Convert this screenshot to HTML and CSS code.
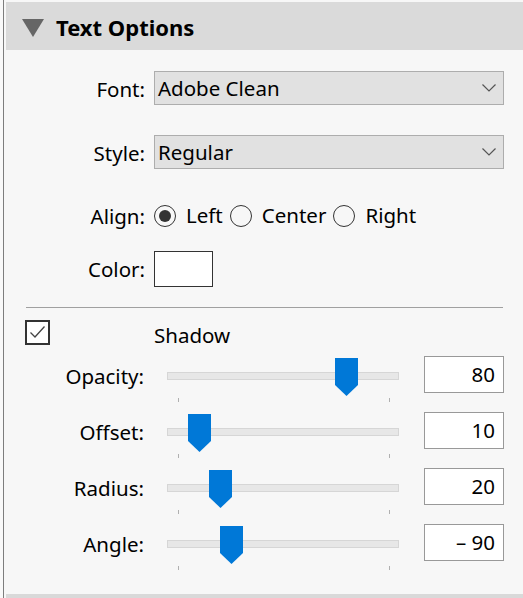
FILE: index.html
```html
<!DOCTYPE html>
<html>
<head>
<meta charset="utf-8">
<link rel="stylesheet" href="styles.css">
</head>
<body>
<div class="panel">
  <div class="header">
    <svg class="caret" width="22" height="18" viewBox="0 0 22 18"><polygon points="0,0 22,0 11,18" fill="#666"/></svg>
    <span class="title">Text Options</span>
  </div>

  <div class="field row-font">
    <span class="label">Font:</span>
    <div class="select"><span>Adobe Clean</span>
      <svg class="chev" width="14" height="8" viewBox="0 0 14 8"><polyline points="0.5,0.5 7,7 13.5,0.5" fill="none" stroke="#555" stroke-width="1.2"/></svg>
    </div>
  </div>

  <div class="field row-style">
    <span class="label">Style:</span>
    <div class="select"><span>Regular</span>
      <svg class="chev" width="14" height="8" viewBox="0 0 14 8"><polyline points="0.5,0.5 7,7 13.5,0.5" fill="none" stroke="#555" stroke-width="1.2"/></svg>
    </div>
  </div>

  <div class="field row-align">
    <span class="label">Align:</span>
    <div class="radios">
      <span class="radio on"></span><span class="rlabel">Left</span>
      <span class="radio"></span><span class="rlabel">Center</span>
      <span class="radio"></span><span class="rlabel">Right</span>
    </div>
  </div>

  <div class="field row-color">
    <span class="label">Color:</span>
    <span class="swatch"></span>
  </div>

  <div class="sep"></div>

  <div class="check-row">
    <span class="checkbox"><svg width="21" height="21" viewBox="0 0 21 21"><polyline points="3.5,10.5 8,15 17.5,4.5" fill="none" stroke="#444" stroke-width="1.3"/></svg></span>
    <span class="check-label">Shadow</span>
  </div>

  <div class="sliders">
    <div class="srow">
      <span class="slabel">Opacity:</span>
      <div class="slider"><div class="track"></div><span class="tick t1"></span><span class="tick t2"></span>
        <svg class="thumb" style="left:168px" width="23" height="38" viewBox="0 0 23 38"><polygon points="0,0 23,0 23,27 11.5,38 0,27" fill="#0078d7"/></svg></div>
      <span class="value">80</span>
    </div>
    <div class="srow">
      <span class="slabel">Offset:</span>
      <div class="slider"><div class="track"></div><span class="tick t1"></span><span class="tick t2"></span>
        <svg class="thumb" style="left:21px" width="23" height="38" viewBox="0 0 23 38"><polygon points="0,0 23,0 23,27 11.5,38 0,27" fill="#0078d7"/></svg></div>
      <span class="value">10</span>
    </div>
    <div class="srow">
      <span class="slabel">Radius:</span>
      <div class="slider"><div class="track"></div><span class="tick t1"></span><span class="tick t2"></span>
        <svg class="thumb" style="left:42px" width="23" height="38" viewBox="0 0 23 38"><polygon points="0,0 23,0 23,27 11.5,38 0,27" fill="#0078d7"/></svg></div>
      <span class="value">20</span>
    </div>
    <div class="srow">
      <span class="slabel">Angle:</span>
      <div class="slider"><div class="track"></div><span class="tick t1"></span><span class="tick t2"></span>
        <svg class="thumb" style="left:53px" width="23" height="38" viewBox="0 0 23 38"><polygon points="0,0 23,0 23,27 11.5,38 0,27" fill="#0078d7"/></svg></div>
      <span class="value">– 90</span>
    </div>
  </div>

  <div class="next-header"></div>
</div>
</body>
</html>
```

FILE: styles.css
```css
html, body {
  margin: 0;
  padding: 0;
  background: #f9f9f9;
}
body {
  font-family: "Noto Sans", "Open Sans", sans-serif;
  font-size: 20.5px;
  color: #000;
}
.panel {
  margin-left: 3px;
  border-left: 1px solid #7d7d7d;
  height: 598px;
  box-sizing: border-box;
  background: #f7f7f7;
  display: flex;
  flex-direction: column;
}
.header {
  margin-top: 2px;
  margin-left: 2px;
  height: 48px;
  background: #dadada;
  display: flex;
  align-items: center;
}
.caret {
  margin-left: 16px;
  margin-top: 4px;
}
.title {
  margin-left: 12px;
  font-weight: 700;
  font-size: 22px;
  line-height: 1;
  padding-top: 2px;
}
.field {
  display: flex;
  align-items: center;
  gap: 9px;
}
.label {
  width: 141px;
  text-align: right;
  line-height: 1;
  padding-top: 3px;
}
.row-font { margin-top: 21px; height: 34px; }
.row-style { margin-top: 30px; height: 34px; }
.row-align { margin-top: 35px; height: 24px; }
.row-align .label { padding-top: 0; }
.row-color { margin-top: 23px; height: 36px; }
.row-color .label { padding-top: 0; }
.select {
  width: 350px;
  height: 34px;
  box-sizing: border-box;
  border: 1px solid #adadad;
  background: #e1e1e1;
  display: flex;
  align-items: center;
  justify-content: space-between;
  padding: 0 7px 0 3px;
  line-height: 1;
}
.select span { padding-top: 1px; }
.radios {
  display: flex;
  align-items: center;
}
.radio {
  width: 22px;
  height: 22px;
  box-sizing: border-box;
  border: 1.5px solid #333;
  border-radius: 50%;
  display: flex;
  align-items: center;
  justify-content: center;
}
.radio.on::after {
  content: "";
  width: 12px;
  height: 12px;
  border-radius: 50%;
  background: #333;
}
.rlabel {
  margin-left: 10px;
  margin-right: 7px;
  line-height: 1;
  padding-bottom: 2px;
}
.swatch {
  width: 59px;
  height: 36px;
  box-sizing: border-box;
  border: 1px solid #333;
  background: #fff;
}
.sep {
  margin-top: 20px;
  margin-left: 22px;
  width: 477px;
  height: 1px;
  background: #a0a0a0;
}
.check-row {
  margin-top: 12px;
  height: 25px;
  display: flex;
  align-items: center;
}
.checkbox {
  margin-left: 21px;
  width: 25px;
  height: 25px;
  box-sizing: border-box;
  border: 2px solid #333;
  background: #fff;
  display: flex;
  align-items: center;
  justify-content: center;
}
.check-label {
  margin-left: 104px;
  margin-top: 6px;
  line-height: 1;
}
.sliders {
  margin-top: 11px;
  display: flex;
  flex-direction: column;
  gap: 19px;
}
.srow {
  height: 37px;
  display: flex;
  align-items: center;
}
.slabel {
  width: 140px;
  text-align: right;
  line-height: 1;
  padding-top: 3px;
}
.slider {
  position: relative;
  margin-left: 23px;
  width: 232px;
  height: 37px;
}
.track {
  position: absolute;
  left: 0;
  right: 0;
  top: 16px;
  height: 8px;
  box-sizing: border-box;
  background: #e7e7e7;
  border: 1px solid #d6d6d6;
}
.tick {
  position: absolute;
  top: 42px;
  width: 1px;
  height: 4px;
  background: #b0b0b0;
}
.t1 { left: 11px; }
.t2 { left: 222px; }
.thumb {
  position: absolute;
  top: 2px;
}
.value {
  margin-left: 25px;
  width: 80px;
  height: 37px;
  box-sizing: border-box;
  border: 1px solid #999;
  background: #fff;
  display: flex;
  align-items: center;
  justify-content: flex-end;
  padding-right: 8px;
  line-height: 1;
}
.next-header {
  margin-top: auto;
  margin-left: 2px;
  height: 4px;
  background: #d9d9d9;
}
```
